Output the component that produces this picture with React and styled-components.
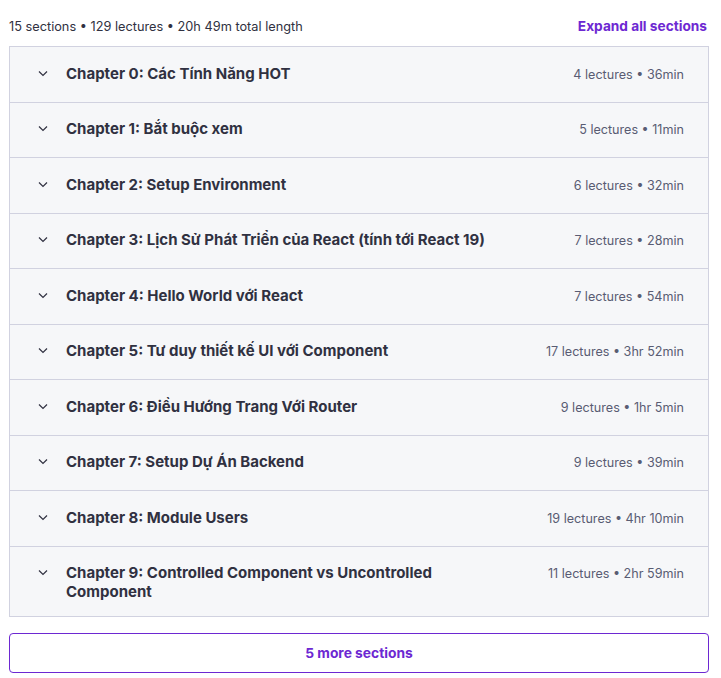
import React from "react";
import styled, { createGlobalStyle } from "styled-components";

const GlobalStyle = createGlobalStyle`
  body {
    margin: 0;
    background: #fff;
    font-family: Inter, "Noto Sans", sans-serif;
    color: #303141;
  }
`;

const Wrapper = styled.div`
  width: 700px;
  margin-left: 9px;
`;

const Header = styled.div`
  display: flex;
  justify-content: space-between;
  align-items: center;
  box-sizing: border-box;
  height: 46px;
  padding: 6px 2px 0 0;
`;

const Summary = styled.span`
  font-size: 12.75px;
  color: #303141;
`;

const ExpandLink = styled.button`
  border: none;
  background: none;
  padding: 0;
  font-family: inherit;
  font-size: 13.7px;
  font-weight: 700;
  color: #6d28d2;
  cursor: pointer;
`;

const Panel = styled.div`
  border: 1px solid #d1d2e0;
`;

const Row = styled.div`
  display: flex;
  align-items: flex-start;
  gap: 16px;
  box-sizing: border-box;
  min-height: 54.5px;
  padding: 16.5px 24px 14.5px;
  background: #f6f7f9;
  & + & {
    border-top: 1px solid #d1d2e0;
    min-height: 55.5px;
  }
`;

const Chevron = styled.svg`
  flex: none;
  width: 16px;
  height: 16px;
  margin-top: 1px;
`;

const Title = styled.span`
  flex: 1;
  max-width: 440px;
  font-size: 15px;
  font-weight: 700;
  line-height: 19px;
  color: #303141;
`;

const Meta = styled.span`
  flex: none;
  margin-left: auto;
  margin-top: 1px;
  font-size: 12.6px;
  line-height: 19px;
  color: #595c73;
`;

const MoreButton = styled.button`
  display: block;
  width: 100%;
  height: 40px;
  margin-top: 16px;
  border: 1px solid #6d28d2;
  border-radius: 4px;
  background: #fff;
  font-family: inherit;
  font-size: 13.8px;
  font-weight: 700;
  color: #6d28d2;
  cursor: pointer;
`;

const sections = [
  ["Chapter 0: Các Tính Năng HOT", "4 lectures • 36min"],
  ["Chapter 1: Bắt buộc xem", "5 lectures • 11min"],
  ["Chapter 2: Setup Environment", "6 lectures • 32min"],
  ["Chapter 3: Lịch Sử Phát Triển của React (tính tới React 19)", "7 lectures • 28min"],
  ["Chapter 4: Hello World với React", "7 lectures • 54min"],
  ["Chapter 5: Tư duy thiết kế UI với Component", "17 lectures • 3hr 52min"],
  ["Chapter 6: Điều Hướng Trang Với Router", "9 lectures • 1hr 5min"],
  ["Chapter 7: Setup Dự Án Backend", "9 lectures • 39min"],
  ["Chapter 8: Module Users", "19 lectures • 4hr 10min"],
  ["Chapter 9: Controlled Component vs Uncontrolled Component", "11 lectures • 2hr 59min"],
];

const App = () => {
  return (
    <>
      <GlobalStyle />
      <Wrapper>
        <Header>
          <Summary>15 sections • 129 lectures • 20h 49m total length</Summary>
          <ExpandLink>Expand all sections</ExpandLink>
        </Header>
        <Panel>
          {sections.map(([title, meta]) => (
            <Row key={title}>
              <Chevron viewBox="0 0 16 16">
                <path
                  d="M5 6.5 L9 10.5 L13 6.5"
                  fill="none"
                  stroke="#303141"
                  strokeWidth="1.2"
                />
              </Chevron>
              <Title>{title}</Title>
              <Meta>{meta}</Meta>
            </Row>
          ))}
        </Panel>
        <MoreButton>5 more sections</MoreButton>
      </Wrapper>
    </>
  );
};

export default App;
